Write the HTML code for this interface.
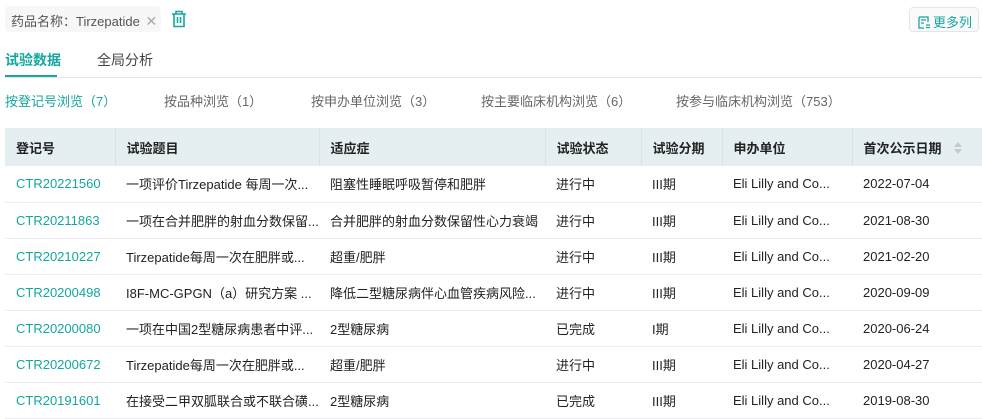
<!DOCTYPE html><html><head><meta charset="utf-8"><style>
*{margin:0;padding:0;box-sizing:border-box}
body{width:982px;height:418px;overflow:hidden;background:#fff;font-family:"Liberation Sans","Noto Sans CJK SC",sans-serif;font-size:13px;color:#222;position:relative}
.a{position:absolute;white-space:nowrap}
.tag{left:5px;top:6px;width:156px;height:26px;background:#f7f7f7;border-radius:4px;color:#555;padding:5px 0 0 6px}
.t{color:#13a89e}
table{position:absolute;left:5px;top:128px;width:977px;border-collapse:collapse}
th{background:#e5eff1;height:38px;text-align:left;padding-left:11px;font-weight:bold;color:#222;border-right:1px solid #d6e4e7;font-size:13px}
td{height:36px;padding-left:11px;border-bottom:1px solid #ececf2;color:#222;white-space:nowrap}
td:first-child{color:#13a89e}
</style></head><body>
<div class="a tag">药品名称：Tirzepatide <span style="color:#aaa;font-size:14px;margin-left:2px">✕</span></div>
<svg class="a" style="left:171px;top:10px" width="16" height="18" viewBox="0 0 16 18" fill="none" stroke="#13a89e" stroke-width="1.6"><path d="M1 4h14M5 4V1.5h6V4M3 4v12.5h10V4M6.5 7v6M9.5 7v6"/></svg>
<div class="a" style="left:909px;top:7px;width:70px;height:25px;border:1px solid #e6e6e6;border-radius:4px;background:#fafafa;color:#13a89e;padding:4px 0 0 8px;font-size:13px;overflow:hidden"><svg width="12" height="13" viewBox="0 0 12 13" fill="none" stroke="#13a89e" stroke-width="1.3" style="vertical-align:-2px;margin-right:3px"><path d="M1 1h9v5M1 1v11h5M3 4h5M3 7h3M8 9h4M8 11.5h4"/></svg>更多列</div>
<div class="a t" style="left:5px;top:50px;font-size:14px;font-weight:bold">试验数据</div>
<div class="a" style="left:97px;top:50px;font-size:14px;color:#444">全局分析</div>
<div class="a" style="left:5px;top:75px;width:52px;height:3px;background:#13a89e"></div>
<div class="a" style="left:5px;top:77px;width:977px;height:1px;background:#e6e6e6"></div>
<div class="a t" style="left:5px;top:91px">按登记号浏览（7）</div>
<div class="a" style="left:164px;top:91px;color:#666">按品种浏览（1）</div>
<div class="a" style="left:311px;top:91px;color:#666">按申办单位浏览（3）</div>
<div class="a" style="left:481px;top:91px;color:#666">按主要临床机构浏览（6）</div>
<div class="a" style="left:676px;top:91px;color:#666">按参与临床机构浏览（753）</div>
<table>
<tr><th style="width:110px">登记号</th><th style="width:204px">试验题目</th><th style="width:226px">适应症</th><th style="width:96px">试验状态</th><th style="width:81px">试验分期</th><th style="width:130px">申办单位</th><th style="border-right:0">首次公示日期 <svg width="10" height="14" viewBox="0 0 10 14" style="vertical-align:-2px;margin-left:8px"><path d="M1 6L5 1L9 6Z M1 8L5 13L9 8Z" fill="#c4c9cc"/></svg></th></tr>
<tr><td>CTR20221560</td><td>一项评价Tirzepatide 每周一次...</td><td>阻塞性睡眠呼吸暂停和肥胖</td><td>进行中</td><td>III期</td><td>Eli Lilly and Co...</td><td>2022-07-04</td></tr>
<tr><td>CTR20211863</td><td>一项在合并肥胖的射血分数保留...</td><td>合并肥胖的射血分数保留性心力衰竭</td><td>进行中</td><td>III期</td><td>Eli Lilly and Co...</td><td>2021-08-30</td></tr>
<tr><td>CTR20210227</td><td>Tirzepatide每周一次在肥胖或...</td><td>超重/肥胖</td><td>进行中</td><td>III期</td><td>Eli Lilly and Co...</td><td>2021-02-20</td></tr>
<tr><td>CTR20200498</td><td>I8F-MC-GPGN（a）研究方案 ...</td><td>降低二型糖尿病伴心血管疾病风险...</td><td>进行中</td><td>III期</td><td>Eli Lilly and Co...</td><td>2020-09-09</td></tr>
<tr><td>CTR20200080</td><td>一项在中国2型糖尿病患者中评...</td><td>2型糖尿病</td><td>已完成</td><td>I期</td><td>Eli Lilly and Co...</td><td>2020-06-24</td></tr>
<tr><td>CTR20200672</td><td>Tirzepatide每周一次在肥胖或...</td><td>超重/肥胖</td><td>进行中</td><td>III期</td><td>Eli Lilly and Co...</td><td>2020-04-27</td></tr>
<tr><td>CTR20191601</td><td>在接受二甲双胍联合或不联合磺...</td><td>2型糖尿病</td><td>已完成</td><td>III期</td><td>Eli Lilly and Co...</td><td>2019-08-30</td></tr>
</table>
</body></html>
